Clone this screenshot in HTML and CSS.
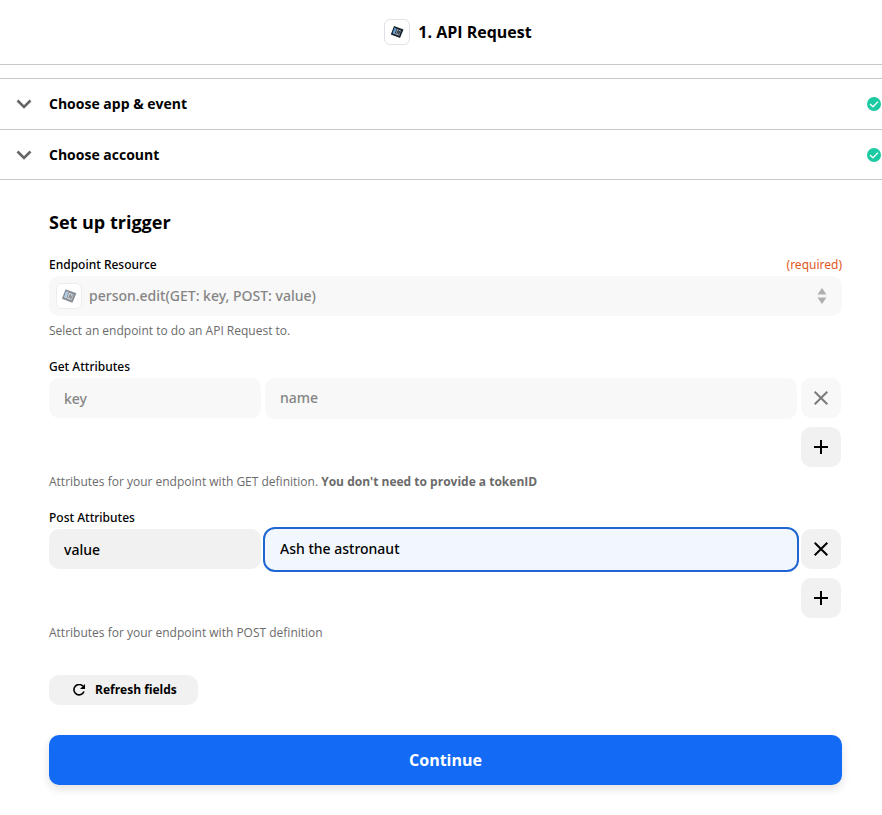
FILE: index.html
```html
<!DOCTYPE html>
<html lang="en">
<head>
<meta charset="utf-8">
<meta name="viewport" content="width=device-width, initial-scale=1">
<title>1. API Request</title>
<link rel="stylesheet" href="styles.css">
</head>
<body>
<svg class="defs" aria-hidden="true">
  <symbol id="app-logo" viewBox="0 0 14 14">
    <path d="M4 1 13.500 4.500 10 13 .8 9.500Z" fill="#17202c"/>
    <path d="M4.800 3.200 11 5.600 9.200 10.800 3 8.400Z" fill="#a9b8c6"/>
    <path d="M4.500 2.800 6 3.300 4 8.800 2.600 8.200Z" fill="#4f9bdc"/>
    <path d="M6.600 4.300 5.200 8.600M8 8.900 8.300 5.400 6.600 8.800M10 5.800 8.500 9.800" stroke="#17202c" stroke-width=".9" fill="none"/>
  </symbol>
  <symbol id="chevron" viewBox="0 0 16 10">
    <path d="M1.500 1.500 8 8 14.500 1.500" fill="none" stroke="currentColor" stroke-width="2.600"/>
  </symbol>
  <symbol id="done" viewBox="0 0 14 14">
    <circle cx="7" cy="7" r="7" fill="#1bcaa3"/>
    <path d="M3 7 6 9.800 11 4.600" fill="none" stroke="#fff" stroke-width="1.300"/>
  </symbol>
  <symbol id="cross" viewBox="0 0 14 14">
    <path d="M.7.7 13.300 13.300M13.300.7.7 13.300" fill="none" stroke="currentColor" stroke-width="2"/>
  </symbol>
  <symbol id="plus" viewBox="0 0 14 14">
    <path d="M7 0V14M0 7H14" fill="none" stroke="currentColor" stroke-width="2"/>
  </symbol>
</svg>

<header class="step-header">
  <span class="app-icon"><svg width="14" height="14"><use href="#app-logo"/></svg></span>
  <h1>1. API Request</h1>
</header>

<main>
  <div class="sections">
    <button class="section" type="button">
      <svg class="chevron" width="16" height="10"><use href="#chevron"/></svg>
      <span>Choose app &amp; event</span>
      <svg class="done" width="14" height="14"><use href="#done"/></svg>
    </button>
    <button class="section" type="button">
      <svg class="chevron" width="16" height="10"><use href="#chevron"/></svg>
      <span>Choose account</span>
      <svg class="done" width="14" height="14"><use href="#done"/></svg>
    </button>
  </div>

  <form class="trigger">
    <h2>Set up trigger</h2>

    <div class="field">
      <div class="label-row">
        <label for="endpoint">Endpoint Resource</label>
        <span class="required">(required)</span>
      </div>
      <div class="select disabled">
        <span class="app-icon"><svg width="16" height="16"><use href="#app-logo"/></svg></span>
        <select id="endpoint" disabled>
          <option>person.edit(GET: key, POST: value)</option>
        </select>
        <svg class="sort" width="10" height="16" viewBox="0 0 10 16"><path d="M5 0 9.500 6.500H.5ZM5 16 9.500 9.500H.5Z" fill="#666"/></svg>
      </div>
      <p class="help">Select an endpoint to do an API Request to.</p>
    </div>

    <div class="field">
      <div class="label-row"><label for="get-key">Get Attributes</label></div>
      <div class="pair disabled">
        <input class="box" id="get-key" value="key" disabled>
        <input class="box wide" aria-label="Get attribute value" value="name" disabled>
        <button class="icon-button" type="button" aria-label="Remove" disabled><svg width="14" height="14"><use href="#cross"/></svg></button>
      </div>
      <button class="icon-button add" type="button" aria-label="Add"><svg width="14" height="14"><use href="#plus"/></svg></button>
      <p class="help">Attributes for your endpoint with GET definition. <strong>You don't need to provide a tokenID</strong></p>
    </div>

    <div class="field">
      <div class="label-row"><label for="post-key">Post Attributes</label></div>
      <div class="pair">
        <input class="box" id="post-key" value="value">
        <input class="box wide active" aria-label="Post attribute value" value="Ash the astronaut">
        <button class="icon-button" type="button" aria-label="Remove"><svg width="14" height="14"><use href="#cross"/></svg></button>
      </div>
      <button class="icon-button add" type="button" aria-label="Add"><svg width="14" height="14"><use href="#plus"/></svg></button>
      <p class="help">Attributes for your endpoint with POST definition</p>
    </div>

    <button class="refresh" type="button">
      <svg width="12" height="12" viewBox="0 0 12 12"><path d="M10 2.200A5.200 5.200 0 1 0 11 7.500" fill="none" stroke="currentColor" stroke-width="1.600"/><path d="M12 0V5H7Z" fill="currentColor"/></svg>
      Refresh fields
    </button>
    <button class="continue" type="submit">Continue</button>
  </form>
</main>
</body>
</html>
```

FILE: styles.css
```css
* {
  box-sizing: border-box;
}

body {
  margin: 0;
  background: #fff;
  color: #000;
  font: 14px/20px "Open Sans", "Noto Sans", sans-serif;
}

h1, h2, p {
  margin: 0;
}

button, input, select {
  margin: 0;
  border: 0;
  font: inherit;
  color: inherit;
}

button {
  padding: 0;
  cursor: pointer;
}

svg {
  display: block;
  flex: none;
}

.defs {
  position: absolute;
  width: 0;
  height: 0;
}

.step-header {
  display: flex;
  align-items: center;
  justify-content: center;
  gap: 8px;
  padding: 19px 0 19px 34px;
  border-bottom: 1px solid #c8c8c8;
}

.app-icon {
  display: flex;
  align-items: center;
  justify-content: center;
  flex: none;
  width: 26px;
  height: 26px;
  border: 1px solid #dfe2e8;
  border-radius: 6px;
  background: #fff;
}

h1 {
  font-size: 16px;
  font-weight: 700;
  line-height: 24px;
}

.sections {
  margin-top: 13px;
  border-top: 1px solid #c8c8c8;
}

.section {
  display: flex;
  align-items: center;
  width: 100%;
  padding: 15px 1px 15px 16px;
  border-bottom: 1px solid #c8c8c8;
  background: none;
  font-weight: 700;
  text-align: left;
}

.section:last-child {
  padding-bottom: 14px;
}

.chevron {
  margin-right: 17px;
  color: #666;
}

.done {
  margin-left: auto;
}

.trigger {
  padding: 30px 40px 30px 49px;
}

h2 {
  margin-bottom: 19px;
  font-size: 18px;
  font-weight: 700;
  line-height: 25px;
}

.field + .field {
  margin-top: 15px;
}

.label-row {
  display: flex;
  justify-content: space-between;
  font-size: 12px;
  line-height: 22px;
}

.label-row,
.select select,
.box {
  font-family: "Noto Sans", "Open Sans", sans-serif;
}

.label-row label,
.select select,
.box {
  font-weight: 500;
}

.required {
  color: #e2571e;
}

.select {
  display: flex;
  align-items: center;
  gap: 7px;
  height: 40px;
  padding: 0 15px 0 7px;
  border-radius: 10px;
  background: #f1f1f1;
}

.select .app-icon {
  border-color: #ededed;
}

.select select {
  flex: 1;
  min-width: 0;
  padding: 0;
  appearance: none;
  background: none;
  opacity: 1;
}

.select.disabled {
  background: #f8f8f8;
  color: #858585;
}

.disabled svg {
  opacity: 0.5;
}

.help {
  margin-top: 5px;
  color: #6b6b6b;
  font-size: 12px;
}

.pair {
  display: grid;
  grid-template-columns: minmax(0, 212px) minmax(0, 1fr) 40px;
  gap: 4px;
  margin-right: 1px;
}

.box {
  width: 100%;
  min-width: 0;
  height: 40px;
  padding: 0 15px;
  border-radius: 10px;
  background: #f1f1f1;
}

.wide {
  height: 41px;
  padding-bottom: 2px;
}

.pair.disabled .box,
.pair.disabled .icon-button {
  background: #f8f8f8;
  color: #858585;
}

.pair.disabled .icon-button {
  color: #000;
}

.pair .box.active {
  outline: 2px solid #2066d2;
  background: #f2f7fe;
}

.icon-button {
  display: flex;
  align-items: center;
  justify-content: center;
  width: 40px;
  height: 40px;
  border-radius: 10px;
  background: #f1f1f1;
}

.add {
  margin: 8px 1px 0 auto;
}

.refresh {
  display: flex;
  align-items: center;
  gap: 10px;
  margin-top: 32px;
  padding: 5px 21px 5px 24px;
  border-radius: 10px;
  background: #f1f1f1;
  font-size: 12px;
  font-weight: 700;
}

.continue {
  width: 100%;
  height: 50px;
  margin-top: 30px;
  border-radius: 10px;
  background: #136bf5;
  box-shadow: 0 4px 10px rgba(0, 0, 0, 0.12);
  color: #fff;
  font-size: 16px;
  font-weight: 700;
}
```
